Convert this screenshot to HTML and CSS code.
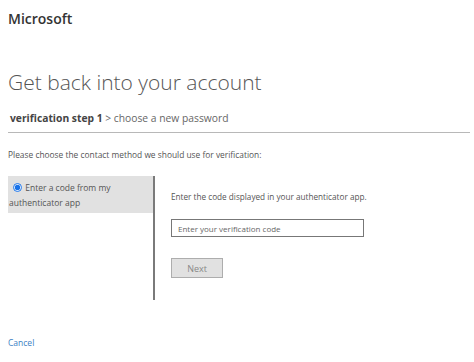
FILE: index.html
```html
<!DOCTYPE html>
<html lang="en">
<head>
    <meta charset="UTF-8">
    <meta name="viewport" content="width=device-width, initial-scale=1.0">
    <title>Microsoft - Get back into your account</title>
    <link rel="stylesheet" href="styles.css">
</head>
<body>
    <div class="page">
        <div class="logo">Microsoft</div>

        <h1>Get back into your account</h1>

        <div class="steps">
            <span class="current">verification step 1</span> &gt; choose a new password
        </div>

        <p class="prompt">Please choose the contact method we should use for verification:</p>

        <div class="method">
            <div class="options">
                <label class="option">
                    <input type="radio" name="method" checked>
                    Enter a code from my authenticator app
                </label>
            </div>
            <div class="details">
                <p class="hint">Enter the code displayed in your authenticator app.</p>
                <input type="text" class="code" placeholder="Enter your verification code">
                <button class="next">Next</button>
            </div>
        </div>

        <a href="#" class="cancel">Cancel</a>
    </div>
</body>
</html>
```

FILE: styles.css
```css
body {
    font-family: "Open Sans", "Noto Sans", sans-serif;
    margin: 0;
    background-color: #fff;
    color: #505050;
}

.page {
    padding: 9px 4px 0 8px;
}

.logo {
    font-size: 14px;
    font-weight: 600;
    color: #333;
    line-height: 20px;
}

h1 {
    font-size: 21px;
    font-weight: 300;
    color: #555;
    margin: 38px 0 0;
    line-height: 30px;
}

.steps {
    font-size: 10.3px;
    color: #666;
    margin-top: 13px;
    padding: 0 2px 6px;
    border-bottom: 1px solid #b8b8b8;
    line-height: 16px;
}

.steps .current {
    font-weight: 700;
    color: #444;
}

.prompt {
    font-size: 8.4px;
    color: #555;
    margin: 16px 0 0;
    line-height: 12px;
}

.method {
    display: flex;
    margin-top: 15px;
}

.options {
    width: 145px;
    height: 124px;
    border-right: 2px solid #7a7a7a;
}

.option {
    display: block;
    background-color: #e1e1e1;
    font-size: 8.5px;
    color: #555;
    line-height: 15px;
    padding: 4px 2px 3px 1px;
}

.option input {
    width: 9px;
    height: 9px;
    margin: 0 1px 0 4px;
    vertical-align: -1px;
    accent-color: #1a73e8;
}

.details {
    padding: 15px 0 0 16px;
}

.hint {
    font-size: 8.2px;
    color: #555;
    margin: 0;
    line-height: 12px;
}

.code {
    display: block;
    box-sizing: border-box;
    width: 193px;
    height: 18px;
    margin-top: 16px;
    padding: 0 6px;
    border: 1px solid #777;
    font-family: inherit;
    font-size: 8px;
    color: #333;
}

.code::placeholder {
    color: #666;
}

.next {
    display: block;
    box-sizing: border-box;
    width: 52px;
    height: 20px;
    margin-top: 21px;
    background-color: #e1e1e1;
    border: 1px solid #adadad;
    font-family: inherit;
    font-size: 9px;
    color: #888;
    padding: 0;
}

.cancel {
    display: inline-block;
    margin-top: 37px;
    font-size: 8.5px;
    color: #3c7fc4;
    text-decoration: none;
}
```
